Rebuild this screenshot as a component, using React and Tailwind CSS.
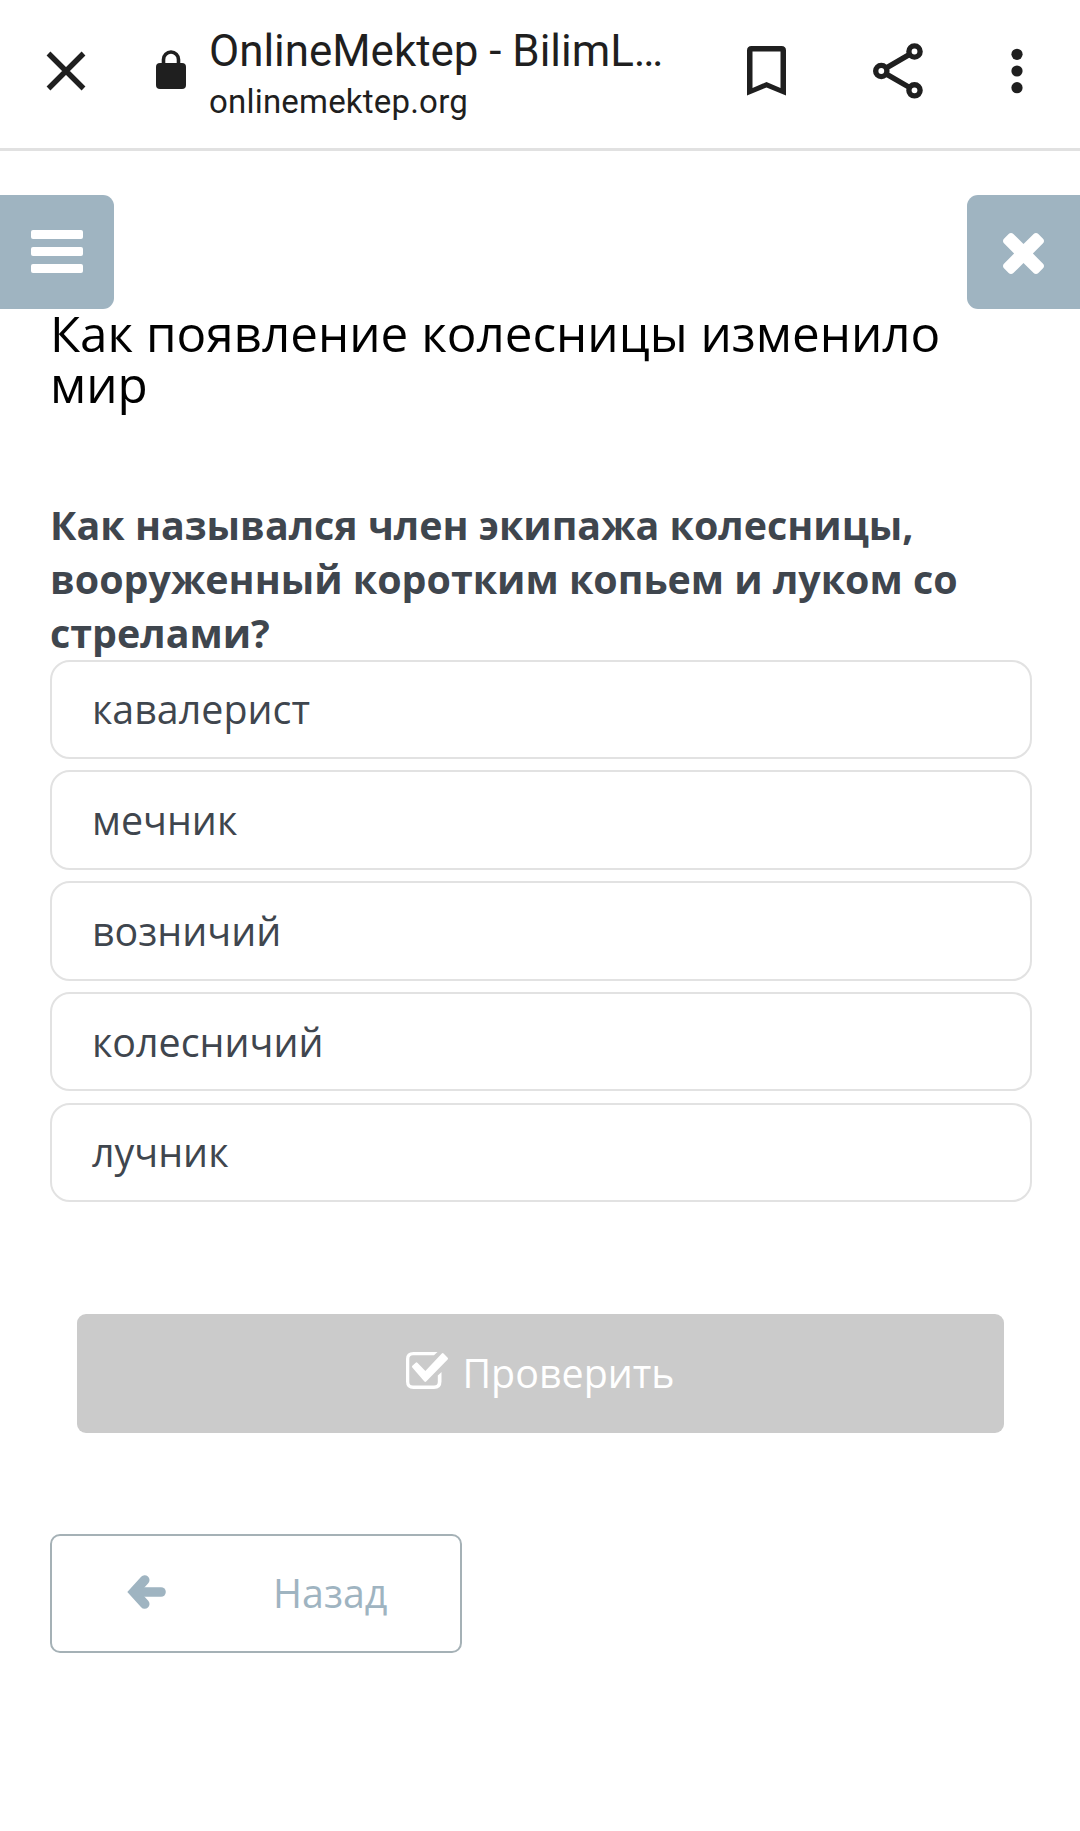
const opciones = ["кавалерист", "мечник", "возничий", "колесничий", "лучник"];

const CloseIcon = () => (
    <svg width="40" height="40" viewBox="0 0 40 40" fill="none" stroke="#1f1f1f" strokeWidth="5.4">
        <path d="M2.5 2.5 37.5 37.5M37.5 2.5 2.5 37.5" />
    </svg>
);

const LockIcon = () => (
    <svg width="30" height="39" viewBox="0 0 30 39">
        <rect x="0" y="13" width="30" height="26" rx="4" fill="#1f1f1f" />
        <path d="M7.5 14V9.5a7.5 7.5 0 0 1 15 0V14" fill="none" stroke="#1f1f1f" strokeWidth="3.6" />
    </svg>
);

const BookmarkIcon = () => (
    <svg width="39" height="50" viewBox="0 0 39 50" fill="#1f1f1f">
        <path fillRule="evenodd" d="M4.5 0H34.5Q39 0 39 4.5V49.5L19.5 41.5 0 49.5V4.5Q0 0 4.5 0ZM5.5 5.5V42L19.5 36 33.5 42V5.5Z" />
    </svg>
);

const ShareIcon = () => (
    <svg width="50" height="56" viewBox="0 0 50 56" fill="none" stroke="#1f1f1f" strokeWidth="5.4">
        <circle cx="8.3" cy="28" r="5.6" />
        <circle cx="41.5" cy="8.5" r="5.6" />
        <circle cx="41.5" cy="47.3" r="5.6" />
        <path d="M13 25.2 36.6 11.3M13 30.8 36.6 44.5" />
    </svg>
);

const DotsIcon = () => (
    <svg width="12" height="46" viewBox="0 0 12 46" fill="#1f1f1f">
        <circle cx="6" cy="6.3" r="5.6" />
        <circle cx="6" cy="23" r="5.6" />
        <circle cx="6" cy="39.7" r="5.6" />
    </svg>
);

const CrossIcon = () => (
    <svg width="41" height="41" viewBox="302 366 1188 1188" fill="#fff">
        <path d="M1490 1322q0 40-28 68l-136 136q-28 28-68 28t-68-28l-294-294-294 294q-28 28-68 28t-68-28l-136-136q-28-28-28-68t28-68l294-294-294-294q-28-28-28-68t28-68l136-136q28-28 68-28t68 28l294 294 294-294q28-28 68-28t68 28l136 136q28 28 28 68t-28 68l-294 294 294 294q28 28 28 68z" />
    </svg>
);

const CheckIcon = () => (
    <svg width="43" height="37" viewBox="0 0 43 37">
        <path
            d="M31.5 0H7.5Q0 0 0 7V29.5Q0 37 7.5 37H28Q35.5 37 35.5 29.5V20L31.8 23.5V30Q31.8 33.6 28 33.6H7Q3.3 33.6 3.3 30V7Q3.3 3.3 7 3.3H28Z"
            fill="#fff"
        />
        <path
            d="M7.2 14.6 10.5 11.6 19.3 20.7 36.7 2.3 40.8 6.6 19.3 28.7Z"
            fill="#fff"
            stroke="#fff"
            strokeWidth="2.4"
            strokeLinejoin="round"
        />
    </svg>
);

const ArrowIcon = () => (
    <svg width="39" height="34" viewBox="0 0 39 34" fill="none" stroke="#9fb4c1" strokeWidth="9.6" strokeLinecap="round">
        <path d="M17.7 5 6.8 17 17.7 29" />
        <path d="M9 17H34" />
    </svg>
);

const BrowserBar = () => (
    <header className="flex h-[151px] items-center border-b-[3px] border-[#e1e1e1] pr-[57px] pl-[46px] pb-[6px]">
        <CloseIcon />
        <div className="mb-[4px] ml-[70px]">
            <LockIcon />
        </div>
        <div className="ml-[23px] w-[480px] pt-[7px] font-['Roboto',sans-serif] text-[#1f1f1f]">
            <div className="text-[43.9px] leading-[54px] whitespace-nowrap">OnlineMektep - BilimL…</div>
            <div className="text-[33px] leading-[48px] tracking-[0.2px]">onlinemektep.org</div>
        </div>
        <div className="ml-auto flex items-center">
            <BookmarkIcon />
            <div className="ml-[87.5px]">
                <ShareIcon />
            </div>
            <div className="ml-[88px]">
                <DotsIcon />
            </div>
        </div>
    </header>
);

const App = () => {
    return (
        <div className="min-h-[1831px] w-full bg-white font-['Open_Sans','Noto_Sans',sans-serif]">
            <BrowserBar />

            <nav className="mt-11 flex justify-between">
                <button className="flex h-[114px] w-[114px] flex-col items-center justify-center gap-2 rounded-r-[11px] bg-[#9fb4c1] pb-[2px]">
                    <span className="h-[9px] w-[52px] rounded-[2px] bg-white" />
                    <span className="h-[9px] w-[52px] rounded-[2px] bg-white" />
                    <span className="h-[9px] w-[52px] rounded-[2px] bg-white" />
                </button>
                <button className="flex h-[114px] w-[113px] items-center justify-center rounded-l-[11px] bg-[#9fb4c1] pt-[2px]">
                    <CrossIcon />
                </button>
            </nav>

            <main className="-mt-[2px] pr-12 pl-[50px]">
                <h1 className="text-[49.4px] leading-[51px] text-black">Как появление колесницы изменило мир</h1>

                <h2 className="mt-[88.6px] text-[39.4px] leading-[54px] font-bold text-[#3f464e]">
                    Как назывался член экипажа колесницы, вооруженный коротким копьем и луком со стрелами?
                </h2>

                <ul className="flex flex-col gap-[11.25px]">
                    {opciones.map((opcion) => (
                        <li
                            key={opcion}
                            className="flex h-[99.5px] items-center rounded-[20px] border-2 border-[#e2e2e2] pl-10 text-[39.4px] leading-[54px] text-[#3f464e]"
                        >
                            {opcion}
                        </li>
                    ))}
                </ul>

                <button className="mt-[112px] ml-[27px] flex h-[119px] w-[927px] items-center justify-center gap-[13px] rounded-[9px] bg-[#cbcbcb] text-[39.4px] text-white">
                    <div className="mb-[6px]">
                        <CheckIcon />
                    </div>
                    Проверить
                </button>

                <button className="mt-[101px] flex h-[119px] w-[412px] items-center rounded-[10px] border-2 border-[#a5b1b6] pl-[75px] text-[39.4px] text-[#9fb4c1]">
                    <div className="mb-[3px]">
                        <ArrowIcon />
                    </div>
                    <span className="ml-[107px]">Назад</span>
                </button>
            </main>
        </div>
    );
};

export default App;
